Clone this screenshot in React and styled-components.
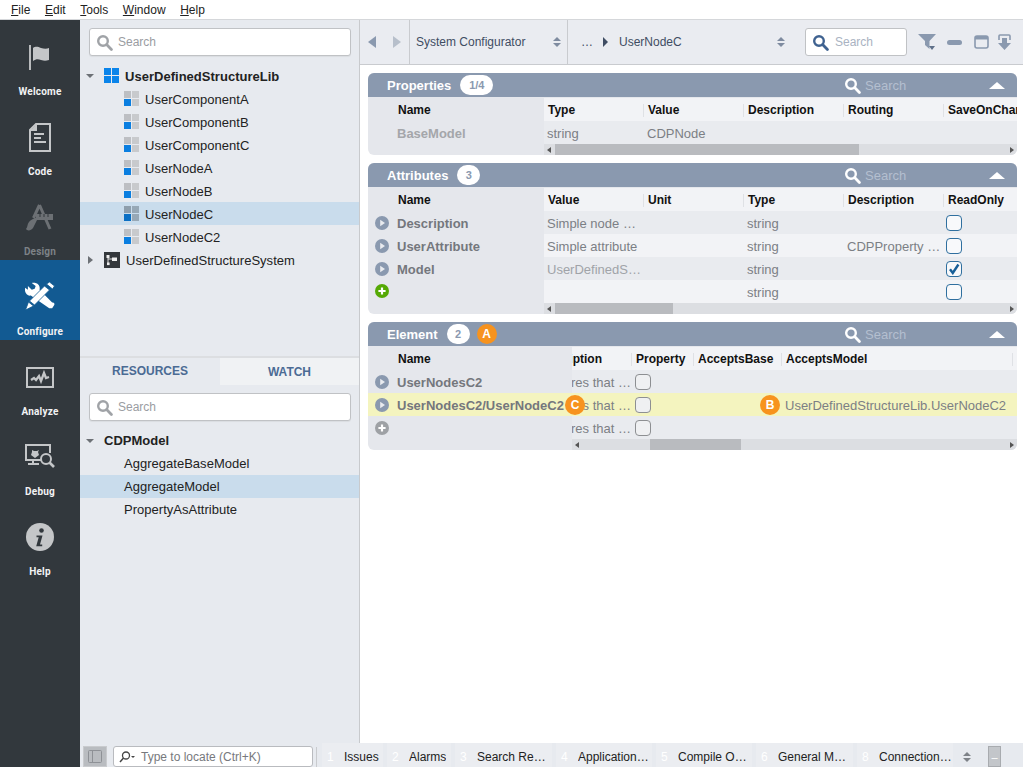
import React from "react";
import styled, { createGlobalStyle } from "styled-components";

const Global = createGlobalStyle`
  html, body { margin: 0; padding: 0; height: 100%; overflow: hidden; }
  body { font-family: "Liberation Sans", Arial, sans-serif; font-size: 13px; background: #fff; }
  #root { height: 100%; }
`;

const Page = styled.div`display:flex;flex-direction:column;width:1023px;height:767px;overflow:hidden;`;
const MenuBar = styled.div`height:19px;box-sizing:content-box;display:flex;align-items:center;background:#fff;border-bottom:1px solid #d5d7da;padding-left:11px;gap:14.6px;font-size:12px;color:#222;flex:none;`;
const MenuItem = styled.span`
  line-height:19px;padding-top:1px;
  &::first-letter{text-decoration:underline;}
`;
const Body = styled.div`flex:1;display:flex;min-height:0;`;

const Sidebar = styled.nav`width:80px;flex:none;background:#32383d;display:flex;flex-direction:column;`;
const SideItem = styled.div`
  height:80px;flex:none;display:flex;flex-direction:column;align-items:center;
  background:${p => (p.$active ? "#125a92" : "transparent")};
  color:${p => (p.$dim ? "#7d8287" : "#f2f3f4")};
`;
const SideIcon = styled.div`height:50px;margin-top:12px;display:flex;align-items:center;justify-content:center;flex:none;margin-bottom:4px;`;
const SideLabel = styled.div`font-family:Roboto,"Liberation Sans",sans-serif;font-weight:700;font-size:10px;line-height:12px;letter-spacing:.2px;`;

const Main = styled.div`flex:1;display:flex;flex-direction:column;min-width:0;`;
const Upper = styled.div`flex:1;display:flex;min-height:0;`;
const LeftPanel = styled.aside`width:279px;flex:none;background:#e7eaef;border-right:1px solid #c8cacd;display:flex;flex-direction:column;`;
const TopSection = styled.div`height:338px;flex:none;padding-top:8px;box-sizing:border-box;border-bottom:2px solid #dcdee1;`;
const SearchBox = styled.div`
  height:28px;box-sizing:border-box;margin:0 8px 0 9px;background:#fff;border:1px solid #c0c2c5;border-radius:3px;
  display:flex;align-items:center;padding-left:6px;gap:5px;color:#9a9da2;font-size:12px;box-shadow:0 1px 1px rgba(0,0,0,.06);
`;
const Tree = styled.div`margin-top:8px;`;
const Row = styled.div`
  height:23px;display:flex;align-items:center;padding-left:${p => p.$indent}px;gap:6px;
  background:${p => (p.$selected ? "#c9dcec" : "transparent")};
  color:#222;font-size:13px;font-weight:${p => (p.$bold ? 700 : 400)};
  letter-spacing:.02px;
`;
const IconText = styled.span`padding-top:1px;`;
const Caret = styled.span`
  width:0;height:0;flex:none;
  ${p => p.$open
    ? "border-left:4px solid transparent;border-right:4px solid transparent;border-top:4px solid #6d7176;margin-right:4px;"
    : "border-top:4px solid transparent;border-bottom:4px solid transparent;border-left:5px solid #6d7176;margin:0 5px 0 2px;"}
`;
const TabRow = styled.div`display:flex;height:27px;flex:none;`;
const Tab = styled.div`
  width:${p => p.$w}px;display:flex;align-items:center;justify-content:center;font-size:12px;font-weight:700;color:#4b6b94;box-sizing:border-box;
  padding-bottom:${p => (p.$active ? 1 : 0)}px;
  background:${p => (p.$active ? "#e7eaef" : "#f0f2f4")};
`;
const LowerSection = styled.div`flex:1;padding-top:8px;`;

const Content = styled.main`flex:1;display:flex;flex-direction:column;background:#fff;min-width:0;`;
const Toolbar = styled.div`height:44px;flex:none;background:#eaecf1;border-bottom:1px solid #c9cbcf;display:flex;align-items:center;color:#3f4d63;font-size:12px;`;
const NavBtns = styled.div`display:flex;align-items:center;width:49px;padding-left:8px;box-sizing:border-box;gap:17px;flex:none;`;
const Crumb = styled.div`
  height:44px;box-sizing:border-box;width:${p => p.$w}px;border-left:1px solid #c9cbcf;display:flex;align-items:center;padding-left:${p => p.$pl}px;flex:none;
`;
const CrumbArrow = styled.svg`margin:0 11px 0 10px;flex:none;`;
const Spinner = styled.span`margin-left:auto;margin-right:${p => p.$mr}px;display:flex;`;
const ToolSearch = styled.div`width:102px;height:28px;box-sizing:border-box;background:#fff;border:1px solid #c0c2c5;border-radius:3px;display:flex;align-items:center;gap:6px;padding-left:6px;color:#a9b3c2;flex:none;margin-right:11px;`;
const ToolIcons = styled.div`display:flex;align-items:center;gap:10px;`;

const Panels = styled.div`padding:8px 6px 0 8px;display:flex;flex-direction:column;gap:8px;`;
const Panel = styled.section`background:#e5e7ec;border-radius:6px;overflow:hidden;position:relative;`;
const PanelHead = styled.header`height:25px;box-sizing:border-box;background:#8a99af;display:flex;align-items:center;color:#fff;font-weight:700;font-size:13px;padding-left:19px;border-bottom:1px solid #e5e7ec;`;
const Count = styled.span`height:20px;min-width:${p => p.$w}px;background:#fff;color:#8a99af;border-radius:10px;font-size:11px;display:flex;align-items:center;justify-content:center;margin-left:${p => p.$ml}px;`;
const Marker = styled.span`
  width:20px;height:20px;border-radius:50%;background:#f7931e;color:#fff;font-size:12px;font-weight:700;display:flex;align-items:center;justify-content:center;flex:none;
  ${p => p.$over ? `position:absolute;left:${p.$left}px;top:2px;z-index:2;` : "margin-left:7px;"}
`;
const HeadTools = styled.div`margin-left:auto;display:flex;align-items:center;color:#b4bfcf;font-weight:400;gap:4px;padding-right:12px;`;
const HeadSearch = styled.span`width:120px;color:#b4bfcf;font-size:13px;`;
const UpTri = styled.span`width:0;height:0;border-left:8px solid transparent;border-right:8px solid transparent;border-bottom:7px solid #fff;`;

const TableWrap = styled.div`display:flex;`;
const Frozen = styled.div`width:${p => p.$w}px;flex:none;background:#e5e7ec;position:relative;z-index:1;`;
const FrozenHead = styled.div`height:23px;box-sizing:border-box;padding-top:1px;display:flex;align-items:center;padding-left:30px;font-size:12px;font-weight:700;color:#111;`;
const FrozenRow = styled.div`
  height:23px;box-sizing:border-box;display:flex;align-items:${p => (p.$top ? "flex-start" : "center")};padding-top:${p => (p.$top ? 4 : 1)}px;padding-left:7px;gap:8px;font-weight:700;
  color:${p => (p.$light ? "#a4a6aa" : "#74777d")};background:${p => (p.$hi ? "#f4f4bf" : "transparent")};position:relative;white-space:nowrap;
`;
const Scroll = styled.div`flex:1;min-width:0;overflow:hidden;display:flex;flex-direction:column;`;
const Grid = styled.div`margin-left:${p => p.$off || 0}px;`;
const GridRow = styled.div`
  display:grid;grid-template-columns:${p => p.$cols};height:23px;box-sizing:border-box;padding-top:1px;align-items:center;
  background:${p => (p.$hi ? "#f4f4bf" : p.$head || p.$alt ? "#f2f3f6" : "#e9ebef")};
  width:1000px;
`;
const HeadCell = styled.div`font-size:12px;font-weight:700;color:#111;padding-left:4px;white-space:nowrap;border-right:1px solid #dfe1e5;height:13px;line-height:13px;box-sizing:border-box;`;
const Cell = styled.div`
  font-size:13px;color:${p => (p.$light ? "#a0a3a8" : "#7c7f85")};padding-left:${p => (p.$flush ? 0 : 3)}px;padding-right:${p => p.$pr || 0}px;
  white-space:nowrap;overflow:hidden;text-overflow:ellipsis;
`;
const MarkCell = styled.div`position:relative;align-self:stretch;margin-top:-1px;`;
const Box = styled.span`
  display:flex;align-items:center;justify-content:center;width:16px;height:16px;box-sizing:border-box;border-radius:4px;
  margin-left:${p => (p.$gray ? 3 : 2)}px;
  background:${p => (p.$gray ? "#eff0f2" : "#f8f9fb")};
  border:1.5px solid ${p => (p.$gray ? "#8d8f92" : "#2f6f9f")};
`;
const ScrollBar = styled.div`height:11px;margin-left:${p => p.$ml}px;background:#dcdee2;position:relative;display:flex;align-items:center;justify-content:space-between;padding:0 3px;box-sizing:border-box;`;
const Thumb = styled.div`position:absolute;top:0;bottom:0;left:${p => p.$l}px;width:${p => p.$w}px;background:#b9bbbf;`;
const Arrow = styled.span`width:0;height:0;border-top:3.5px solid transparent;border-bottom:3.5px solid transparent;${p => p.$left ? "border-right:4px solid #555;" : "border-left:4px solid #555;"}`;
const RowGap = styled.span`display:block;width:14px;flex:none;`;

const StatusBar = styled.footer`height:24px;flex:none;background:#e7eaef;display:flex;align-items:flex-end;padding-left:3px;font-size:12px;color:#222;`;
const PanelToggle = styled.div`width:24px;height:21px;background:#b9bcc0;border:1px solid #c9cbce;box-sizing:border-box;display:flex;align-items:center;justify-content:center;flex:none;`;
const Locate = styled.div`width:200px;height:21px;box-sizing:border-box;margin-left:6px;background:#fff;border:1px solid #b9bbbf;border-radius:3px;display:flex;align-items:center;padding-left:5px;gap:5px;color:#77797d;flex:none;`;
const Divider = styled.div`width:1px;height:20px;background:#c9cbce;margin:0 5px 0 3px;flex:none;`;
const BottomTabs = styled.div`display:flex;gap:4px;height:24px;`;
const BottomTab = styled.div`width:${p => p.$w}px;background:#ebedf1;display:flex;align-items:center;padding:4px 0 0 5px;box-sizing:border-box;flex:none;white-space:nowrap;`;
const TabNum = styled.span`color:#fff;width:17px;flex:none;`;
const TabName = styled.span`overflow:hidden;text-overflow:ellipsis;white-space:nowrap;max-width:${p => p.$max}px;`;
const StatusSpin = styled.span`margin:0 0 5px 10px;display:flex;`;
const Collapse = styled.div`width:13px;height:21px;box-sizing:border-box;margin-left:17px;background:#c3c6ca;border:1px solid #a8abaf;display:flex;align-items:center;justify-content:center;color:#fff;font-size:11px;flex:none;`;

const SearchIcon = ({ c = "#a0a3a7", s = 17 }) => (
  <svg width={s} height={s} viewBox="0 0 17 17" fill="none" style={{ flex: "none" }}>
    <circle cx="7" cy="7" r="4.8" stroke={c} strokeWidth="2.4" />
    <path d="M10.6 10.6 15.4 15.4" stroke={c} strokeWidth="2.8" strokeLinecap="round" />
  </svg>
);
const UpDown = ({ c = "#7f8ba0" }) => (
  <svg width="8" height="10" viewBox="0 0 8 10"><path d="M4 0 8 4H0zM4 10 0 6h8z" fill={c} /></svg>
);
const CompIcon = ({ sel }) => {
  const g1 = sel ? "#8e9eac" : "#bdbfc3", g2 = sel ? "#97a8b6" : "#c8cacd", b = sel ? "#0a6fc4" : "#0a7ee0";
  return (
    <svg width="15" height="15" viewBox="0 0 15 15" style={{ flex: "none" }}>
      <rect width="7" height="7" fill={g1} /><rect x="8" width="7" height="7" fill={g2} />
      <rect y="8" width="7" height="7" fill={b} /><rect x="8" y="8" width="7" height="7" fill={g2} />
    </svg>
  );
};
const LibIcon = () => (
  <svg width="15" height="15" viewBox="0 0 15 15" style={{ flex: "none" }}>
    <rect width="7" height="7" fill="#0a84ea" /><rect x="8" width="7" height="7" fill="#0a84ea" />
    <rect y="8" width="7" height="7" fill="#0a84ea" /><rect x="8" y="8" width="7" height="7" fill="#0a84ea" />
  </svg>
);
const SysIcon = () => (
  <svg width="16" height="16" viewBox="0 0 16 16" style={{ flex: "none" }}>
    <rect width="16" height="16" fill="#33373b" />
    <path d="M4 4v8M4 7h5" stroke="#ddd" strokeWidth="1" />
    <rect x="2.5" y="3" width="3" height="3" fill="#eee" /><rect x="8" y="5.5" width="5" height="3.5" fill="#eee" /><rect x="3" y="10.5" width="2.6" height="2.6" fill="#eee" />
  </svg>
);
const Play = () => (
  <svg width="14" height="14" viewBox="0 0 14 14" style={{ flex: "none" }}><circle cx="7" cy="7" r="7" fill="#8a99af" /><path d="M5.2 3.8 10 7l-4.8 3.2z" fill="#e9ebef" /></svg>
);
const Plus = ({ c }) => (
  <svg width="14" height="14" viewBox="0 0 14 14" style={{ flex: "none" }}><circle cx="7" cy="7" r="7" fill={c} /><path d="M7 3.4v7.2M3.4 7h7.2" stroke="#fff" strokeWidth="2.2" /></svg>
);
const Check = () => (
  <svg width="12" height="12" viewBox="0 0 12 12"><path d="M2 6.2 4.8 10 10.4 1.5" fill="none" stroke="#175f98" strokeWidth="2.4" /></svg>
);

const FlagI = () => (
  <svg width="24" height="25" viewBox="0 0 24 25">
    <rect x="1" y="0" width="2" height="25" fill="#b9bbbd" />
    <path d="M5 3c3-2 5-1 8 0s6 1 8 0v12c-3 1-5 1-8 0s-5-1-8 1z" fill="#c4c6c8" />
  </svg>
);
const DocI = () => (
  <svg width="22" height="29" viewBox="0 0 22 29">
    <path d="M7 1h14v27H1V7zM7 1v6H1" fill="none" stroke="#c4c6c8" strokeWidth="2" />
    <path d="M5 11h10M5 15h7M5 19h12" stroke="#c4c6c8" strokeWidth="1.8" />
    <path d="M2 7l5-5v5z" fill="#c4c6c8" />
  </svg>
);
const DesignI = () => (
  <svg width="28" height="27" viewBox="0 0 28 27" fill="#6c7074">
    <path d="M13.500 1 7.500 14M13.500 1 24 25" fill="none" stroke="#6c7074" strokeWidth="3" />
    <rect x="10" y="10" width="17" height="6" />
    <path d="M14 10v3M18 10v3M22 10v3" stroke="#32383d" strokeWidth="1" />
    <path d="M12 14 7 24C5 27 1 27 0 25 2 23 1 20 3 18 4 16 7 15 9 14z" />
  </svg>
);
const ConfigI = () => (
  <svg width="30" height="30" viewBox="0 0 30 30" fill="#fff">
    <path d="M3 3l4 4 3-1 1-3-4-3c5-1 9 2 8 7l13 13c2 0 3 1 2 3l-2 3h-3L6 13C2 14-1 9 0 5l3 2z" transform="translate(0 1) scale(.97)" />
    <path d="M22 2l3-2 5 4-2 3zM20 4l5 4L10 23l-5-4z M4 20l5 4-8 4z" transform="translate(-.5 0)" stroke="#125a92" strokeWidth=".8" />
  </svg>
);
const AnalyzeI = () => (
  <svg width="28" height="21" viewBox="0 0 28 21">
    <rect x="1" y="1" width="26" height="19" fill="none" stroke="#c4c6c8" strokeWidth="2" />
    <path d="M5 13l3-2 2 2 3-4 2 5 3-8 2 5 3-1" fill="none" stroke="#c4c6c8" strokeWidth="2.300" />
  </svg>
);
const DebugI = () => (
  <svg width="30" height="26" viewBox="0 0 30 26">
    <path d="M17 16H1V1h24v8" fill="none" stroke="#c4c6c8" strokeWidth="2" />
    <path d="M8 16v3M3 20h11" stroke="#c4c6c8" strokeWidth="2" />
    <path d="M7 6l2 1h3l2-1-1 2 1 3-4 3-4-3 1-3z" fill="#c4c6c8" />
    <circle cx="21" cy="15" r="5" fill="none" stroke="#c4c6c8" strokeWidth="2" />
    <path d="M24.500 18.500 29 23" stroke="#c4c6c8" strokeWidth="2.600" />
  </svg>
);
const InfoI = () => (
  <svg width="28" height="28" viewBox="0 0 28 28">
    <circle cx="14" cy="14" r="14" fill="#c4c6c8" />
    <circle cx="15.500" cy="7.500" r="2.300" fill="#32383d" />
    <path d="M10.500 12.500h6l-2.500 9h2.200v1.700h-6l2.500-9H10.500z" fill="#32383d" />
  </svg>
);

const navItems = [
  ["Welcome", <FlagI />], ["Code", <DocI />], ["Design", <DesignI />, "dim"], ["Configure", <ConfigI />, "active"],
  ["Analyze", <AnalyzeI />], ["Debug", <DebugI />], ["Help", <InfoI />],
];
const menu = ["File", "Edit", "Tools", "Window", "Help"];
const comps = ["UserComponentA", "UserComponentB", "UserComponentC", "UserNodeA", "UserNodeB", "UserNodeC", "UserNodeC2"];
const bottom = [
  ["1", "Issues", 61, 70], ["2", "Alarms", 64, 70], ["3", "Search Results", 97, 70], ["4", "Application Output", 96, 72],
  ["5", "Compile Output", 96, 70], ["6", "General Messages", 97, 69], ["8", "Connection Status", 96, 73],
];

const C100 = "repeat(4,100px) 200px";
const ELEM = "100px 62px 88px 260px";
const DESC = "Measures that allow";

const HeadRight = () => (
  <HeadTools><SearchIcon c="#fff" /><HeadSearch>Search</HeadSearch><UpTri /></HeadTools>
);

export default function App() {
  return (
    <Page>
      <Global />
      <MenuBar>{menu.map(m => <MenuItem key={m}>{m}</MenuItem>)}</MenuBar>
      <Body>
        <Sidebar>
          {navItems.map(([l, ic, st]) => (
            <SideItem key={l} $active={st === "active"} $dim={st === "dim"}>
              <SideIcon>{ic}</SideIcon>
              <SideLabel>{l}</SideLabel>
            </SideItem>
          ))}
        </Sidebar>
        <Main>
          <Upper>
            <LeftPanel>
              <TopSection>
                <SearchBox><SearchIcon />Search</SearchBox>
                <Tree>
                  <Row $indent={6} $bold><Caret $open /><LibIcon /><IconText>UserDefinedStructureLib</IconText></Row>
                  {comps.map(c => (
                    <Row key={c} $indent={44} $selected={c === "UserNodeC"}><CompIcon sel={c === "UserNodeC"} /><IconText>{c}</IconText></Row>
                  ))}
                  <Row $indent={6}><Caret /><SysIcon /><IconText>UserDefinedStructureSystem</IconText></Row>
                </Tree>
              </TopSection>
              <TabRow><Tab $w={140} $active>RESOURCES</Tab><Tab $w={139}>WATCH</Tab></TabRow>
              <LowerSection>
                <SearchBox><SearchIcon />Search</SearchBox>
                <Tree>
                  <Row $indent={6} $bold><Caret $open />CDPModel</Row>
                  <Row $indent={44}>AggregateBaseModel</Row>
                  <Row $indent={44} $selected>AggregateModel</Row>
                  <Row $indent={44}>PropertyAsAttribute</Row>
                </Tree>
              </LowerSection>
            </LeftPanel>
            <Content>
              <Toolbar>
                <NavBtns>
                  <svg width="8" height="12" viewBox="0 0 8 12"><path d="M8 0v12L0 6z" fill="#8a99af" /></svg>
                  <svg width="8" height="12" viewBox="0 0 8 12"><path d="M0 0v12l8-6z" fill="#b7bfcb" /></svg>
                </NavBtns>
                <Crumb $w={158} $pl={6}>System Configurator<Spinner $mr={6}><UpDown /></Spinner></Crumb>
                <Crumb $w={238} $pl={13}>…<CrumbArrow width="5" height="10" viewBox="0 0 5 10"><path d="M0 0v10l5-5z" fill="#3f4d63" /></CrumbArrow>UserNodeC<Spinner $mr={20}><UpDown /></Spinner></Crumb>
                <ToolSearch><SearchIcon c="#3f6290" />Search</ToolSearch>
                <ToolIcons>
                  <svg width="18" height="17" viewBox="0 0 18 17"><path d="M0 0h18l-6.500 7v8L7 11V7z" fill="#8a99af" /><path d="M11 12h6l-3 4z" fill="#5f7089" /></svg>
                  <svg style={{ marginLeft: 1 }} width="15" height="5" viewBox="0 0 15 5"><rect width="15" height="5" rx="2.500" fill="#8a99af" /></svg>
                  <svg style={{ marginLeft: 2 }} width="15" height="14" viewBox="0 0 15 14"><rect x="1" y="1" width="13" height="12" rx="2" fill="none" stroke="#8a99af" strokeWidth="1.600" /><rect x="1" y="1" width="13" height="3.500" fill="#8a99af" /></svg>
                  <svg style={{ marginLeft: -2 }} width="15" height="17" viewBox="0 0 15 17"><path d="M2 6V2a1 1 0 0 1 1-1h9a1 1 0 0 1 1 1v4" fill="none" stroke="#8a99af" strokeWidth="1.600" /><path d="M5 4h5v5h4l-6.500 7L1 9h4z" fill="#8a99af" /></svg>
                </ToolIcons>
              </Toolbar>
              <Panels>
                <Panel>
                  <PanelHead>Properties<Count $w={33} $ml={9}>1/4</Count><HeadRight /></PanelHead>
                  <TableWrap>
                    <Frozen $w={176}>
                      <FrozenHead>Name</FrozenHead>
                      <FrozenRow $light><RowGap />BaseModel</FrozenRow>
                    </Frozen>
                    <Scroll>
                      <GridRow $head $cols={C100}>
                        {["Type", "Value", "Description", "Routing", "SaveOnChange"].map(h => <HeadCell key={h}>{h}</HeadCell>)}
                      </GridRow>
                      <GridRow $cols={C100}><Cell>string</Cell><Cell>CDPNode</Cell></GridRow>
                    </Scroll>
                  </TableWrap>
                  <ScrollBar $ml={176}><Thumb $l={11} $w={304} /><Arrow $left /><Arrow /></ScrollBar>
                </Panel>

                <Panel>
                  <PanelHead>Attributes<Count $w={23} $ml={9}>3</Count><HeadRight /></PanelHead>
                  <TableWrap>
                    <Frozen $w={176}>
                      <FrozenHead>Name</FrozenHead>
                      <FrozenRow><Play />Description</FrozenRow>
                      <FrozenRow><Play />UserAttribute</FrozenRow>
                      <FrozenRow><Play />Model</FrozenRow>
                      <FrozenRow $top><Plus c="#55a905" /></FrozenRow>
                    </Frozen>
                    <Scroll>
                      <GridRow $head $cols={C100}>
                        {["Value", "Unit", "Type", "Description", "ReadOnly"].map(h => <HeadCell key={h}>{h}</HeadCell>)}
                      </GridRow>
                      <GridRow $cols={C100}><Cell $pr={4}>Simple node comment</Cell><Cell /><Cell>string</Cell><Cell /><Box /></GridRow>
                      <GridRow $alt $cols={C100}><Cell>Simple attribute</Cell><Cell /><Cell>string</Cell><Cell $pr={3}>CDPProperty type</Cell><Box /></GridRow>
                      <GridRow $cols={C100}><Cell $light>UserDefinedStructure</Cell><Cell /><Cell>string</Cell><Cell /><Box><Check /></Box></GridRow>
                      <GridRow $alt $cols={C100}><Cell /><Cell /><Cell>string</Cell><Cell /><Box /></GridRow>
                    </Scroll>
                  </TableWrap>
                  <ScrollBar $ml={176}><Thumb $l={11} $w={118} /><Arrow $left /><Arrow /></ScrollBar>
                </Panel>

                <Panel>
                  <PanelHead>Element<Count $w={23} $ml={9}>2</Count><Marker>A</Marker><HeadRight /></PanelHead>
                  <TableWrap>
                    <Frozen $w={204}>
                      <FrozenHead>Name</FrozenHead>
                      <FrozenRow><Play />UserNodesC2</FrozenRow>
                      <FrozenRow $hi><Play />UserNodesC2/UserNodeC2<Marker $over $left={197}>C</Marker></FrozenRow>
                      <FrozenRow><Plus c="#9ea1a5" /></FrozenRow>
                    </Frozen>
                    <Scroll>
                      <Grid $off={-40}>
                        <GridRow $head $cols="100px 62px 88px 231px"><HeadCell>Description</HeadCell><HeadCell>Property</HeadCell><HeadCell>AcceptsBase</HeadCell><HeadCell>AcceptsModel</HeadCell></GridRow>
                        <GridRow $cols={ELEM}><Cell $flush>{DESC}</Cell><Box $gray /></GridRow>
                        <GridRow $hi $cols={ELEM}><Cell $flush>{DESC}</Cell><Box $gray /><MarkCell><Marker $over $left={66}>B</Marker></MarkCell><Cell>UserDefinedStructureLib.UserNodeC2</Cell></GridRow>
                        <GridRow $cols={ELEM}><Cell $flush>{DESC}</Cell><Box $gray /></GridRow>
                      </Grid>
                    </Scroll>
                  </TableWrap>
                  <ScrollBar $ml={204}><Thumb $l={78} $w={91} /><Arrow $left /><Arrow /></ScrollBar>
                </Panel>
              </Panels>
            </Content>
          </Upper>
          <StatusBar>
            <PanelToggle>
              <svg width="14" height="13" viewBox="0 0 14 13"><rect x=".5" y=".5" width="13" height="12" rx="1" fill="none" stroke="#8e9196" /><path d="M4.500 1v11" stroke="#8e9196" /></svg>
            </PanelToggle>
            <Locate>
              <svg width="17" height="12" viewBox="0 0 17 12"><circle cx="7" cy="4.500" r="3.500" fill="none" stroke="#444" strokeWidth="1.300" /><path d="M4.500 7 1 11" stroke="#444" strokeWidth="1.500" /><path d="M12 5h4l-2 2z" fill="#444" /></svg>
              Type to locate (Ctrl+K)
            </Locate>
            <Divider />
            <BottomTabs>
              {bottom.map(([n, t, w, m]) => <BottomTab key={n} $w={w}><TabNum>{n}</TabNum><TabName $max={m}>{t}</TabName></BottomTab>)}
            </BottomTabs>
            <StatusSpin><UpDown c="#7e8288" /></StatusSpin>
            <Collapse>–</Collapse>
          </StatusBar>
        </Main>
      </Body>
    </Page>
  );
}
